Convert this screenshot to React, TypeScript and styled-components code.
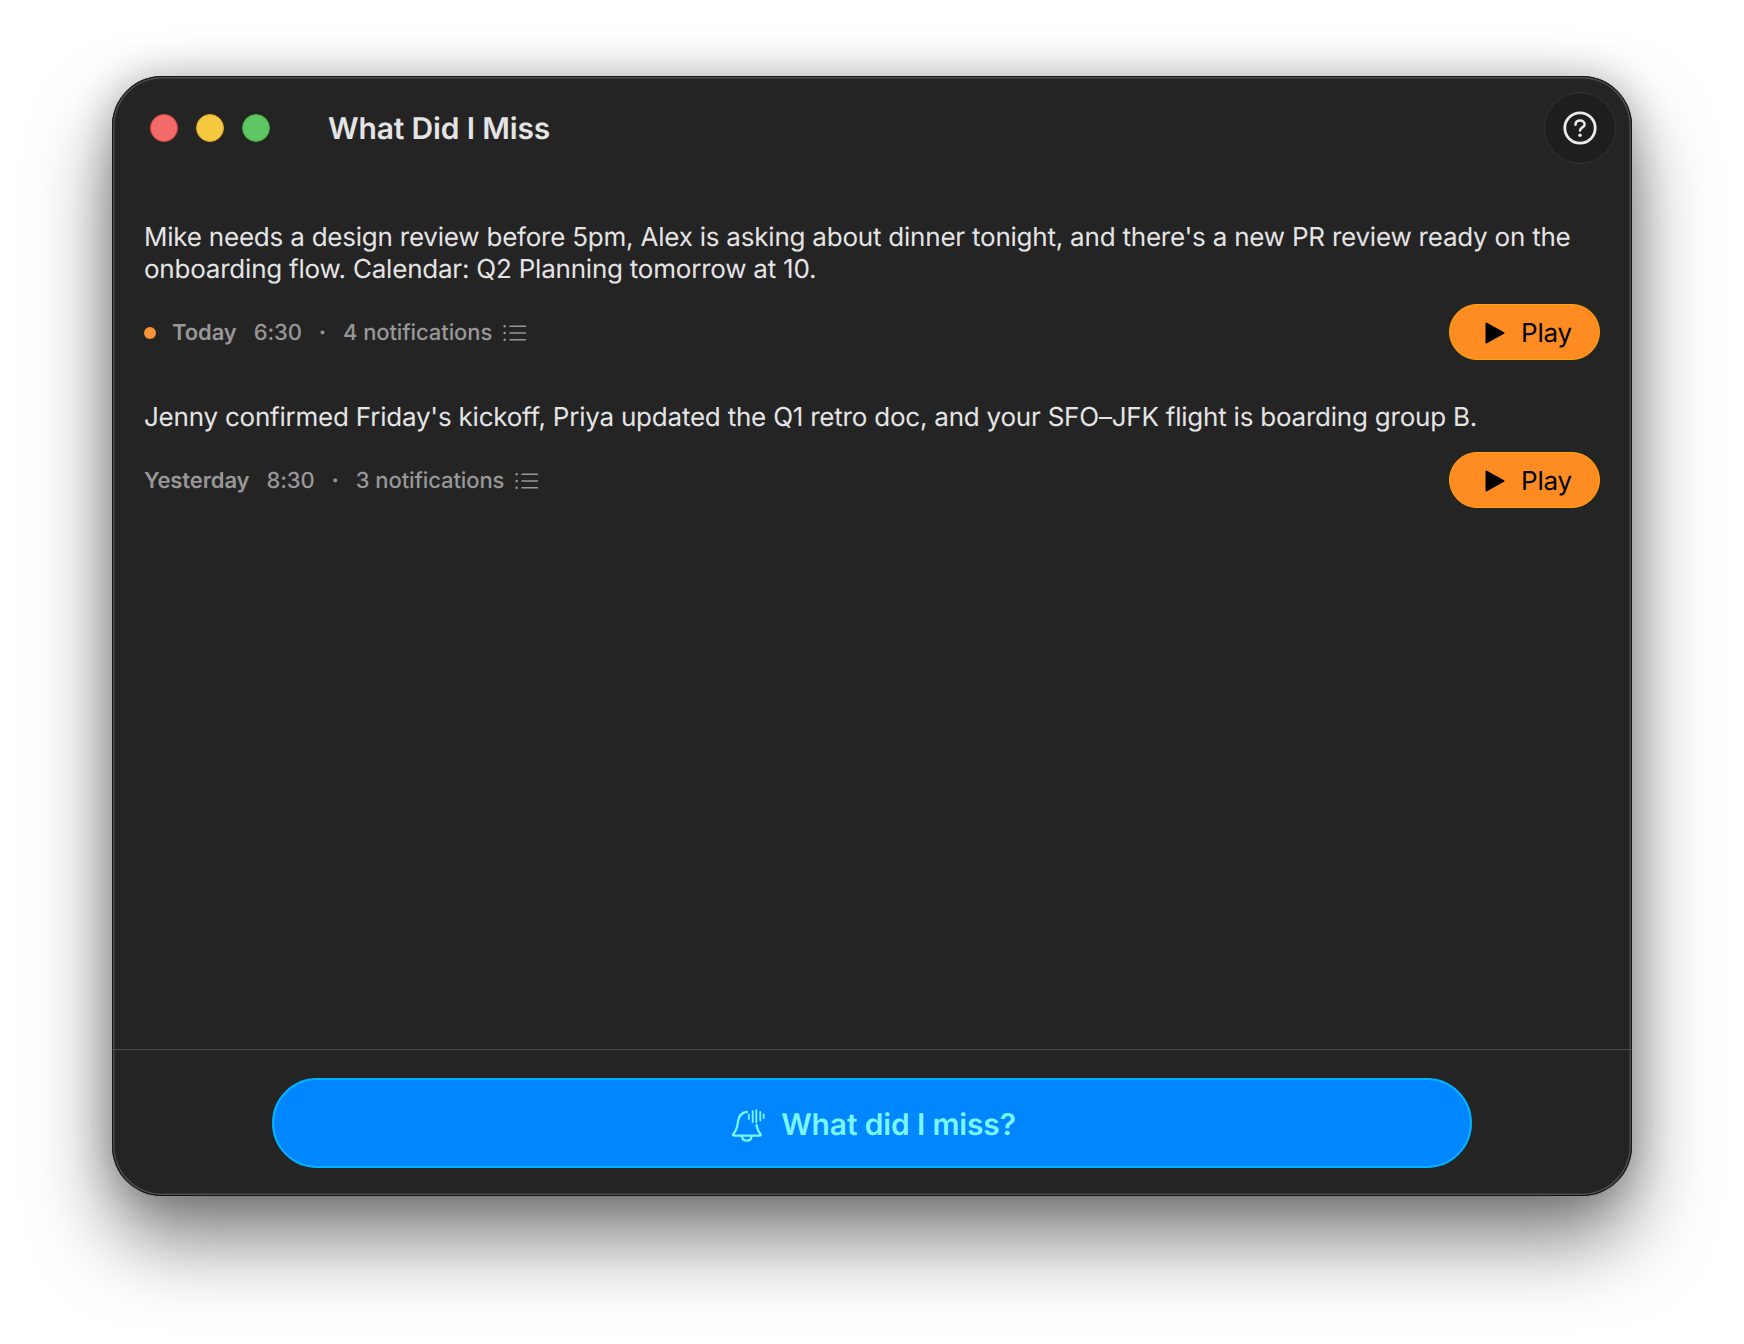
import { createGlobalStyle, styled } from 'styled-components';

const GlobalStyle = createGlobalStyle`
  html, body {
    margin: 0;
    padding: 0;
    background: #fff;
  }
`;

const digests = [
  {
    id: 'today',
    text: "Mike needs a design review before 5pm, Alex is asking about dinner tonight, and there's a new PR review ready on the onboarding flow. Calendar: Q2 Planning tomorrow at 10.",
    day: 'Today',
    time: '6:30',
    count: 4,
    unread: true,
  },
  {
    id: 'yesterday',
    text: "Jenny confirmed Friday's kickoff, Priya updated the Q1 retro doc, and your SFO–JFK flight is boarding group B.",
    day: 'Yesterday',
    time: '8:30',
    count: 3,
    unread: false,
  },
];

const ListIcon = () => (
  <svg width="24" height="24" viewBox="0 0 24 24" fill="none" stroke="#979797" strokeWidth="1.5" strokeLinecap="round">
    <path d="M7 5.2h15.5M7 12h15.5M7 18.8h15.5" />
    <path d="M1.6 5.2h.1M1.6 12h.1M1.6 18.8h.1" strokeWidth="2.4" />
  </svg>
);

const PlayIcon = () => (
  <svg width="20" height="22" viewBox="0 0 20 22" fill="#000" stroke="#000" strokeWidth="2" strokeLinejoin="round">
    <path d="M1.500 1.500 18.500 11 1.500 20.500Z" />
  </svg>
);

const HelpIcon = () => (
  <svg width="36" height="36" viewBox="0 0 36 36" fill="none" stroke="#ececec" strokeLinecap="round">
    <circle cx="18" cy="18" r="15.200" strokeWidth="2.800" />
    <path d="M13.500 14.800c0-2.800 2-4.300 4.600-4.300s4.500 1.600 4.500 3.900c0 2.900-4.600 3.100-4.600 6.200" strokeWidth="2.500" />
    <circle cx="18" cy="25.200" r="1.700" fill="#ececec" stroke="none" />
  </svg>
);

const BellIcon = () => (
  <svg width="33" height="33" viewBox="0 0 33 33" fill="none" stroke="#7bf6ff" strokeWidth="2.300" strokeLinecap="round" strokeLinejoin="round">
    <path d="M15 2.800C9.500 3.500 6.500 7.500 6 12.500c-.5 5.500-2 9.500-4.800 12.700-.6.700-.2 1.500.7 1.500h25.900c.9 0 1.300-.8.7-1.500-1.900-2.300-3.300-5-4-9" />
    <path d="M10 27.500c.4 2.600 2.400 4.200 4.800 4.200s4.400-1.600 4.800-4.200" />
    <path d="M16.800 5.500v4.500M20.700 2.200v11M24.300 1v12.300M28.300 3v8.500M31.700 5.500v3.500" strokeWidth="1.800" />
  </svg>
);

const App = () => (
  <>
    <GlobalStyle />
    <Page>
      <Window>
        <TitleBar>
          <Lights>
            <Light $fill="#f26a6a" $edge="#d9484a" />
            <Light $fill="#f5c83f" $edge="#d9a625" />
            <Light $fill="#60c563" $edge="#3fa846" />
          </Lights>
          <Title>What Did I Miss</Title>
          <HelpButton aria-label="Help">
            <HelpIcon />
          </HelpButton>
        </TitleBar>
        <Content>
          {digests.map(digest => (
            <Digest key={digest.id}>
              <Summary>{digest.text}</Summary>
              <MetaRow>
                <Meta>
                  {digest.unread && <UnreadDot />}
                  <Day>{digest.day}</Day>
                  <span>{digest.time}</span>
                  <Separator>·</Separator>
                  <Count>
                    {digest.count} notifications
                    <ListIcon />
                  </Count>
                </Meta>
                <PlayButton>
                  <PlayIcon />
                  Play
                </PlayButton>
              </MetaRow>
            </Digest>
          ))}
        </Content>
        <Footer>
          <AskButton>
            <BellIcon />
            What did I miss?
          </AskButton>
        </Footer>
      </Window>
    </Page>
  </>
);

const Page = styled.div`
  box-sizing: border-box;
  width: 1744px;
  height: 1344px;
  padding: 76px 112px 148px;
  overflow: hidden;
  font-family: Inter, 'Liberation Sans', sans-serif;
  letter-spacing: -0.01em;
  text-rendering: geometricPrecision;
`;

const Window = styled.div`
  display: flex;
  flex-direction: column;
  height: 100%;
  background: #242424;
  border-radius: 50px;
  box-shadow:
    inset 0 0 0 1px #161616,
    inset 0 0 0 2.5px #4c4c4c,
    0 44px 80px rgba(0, 0, 0, 0.5),
    0 0 40px rgba(0, 0, 0, 0.24);
`;

const TitleBar = styled.div`
  display: flex;
  align-items: center;
  height: 72px;
  padding: 16px 16px 0 38px;
`;

const Lights = styled.div`
  display: flex;
  gap: 18px;
`;

const Light = styled.span<{ $fill: string; $edge: string }>`
  box-sizing: border-box;
  width: 28px;
  height: 28px;
  border-radius: 50%;
  background: ${p => p.$fill};
  border: 1px solid ${p => p.$edge};
`;

const Title = styled.h1`
  margin: 1px 0 0 58px;
  font-size: 30px;
  font-weight: 600;
  color: #e4e4e4;
`;

const HelpButton = styled.button`
  display: flex;
  align-items: center;
  justify-content: center;
  box-sizing: border-box;
  width: 72px;
  height: 72px;
  margin-left: auto;
  padding: 0;
  background: #1e1e1e;
  border: 1.5px solid #333;
  border-radius: 50%;
`;

const Content = styled.div`
  flex: 1;
  display: flex;
  flex-direction: column;
  gap: 42px;
  padding: 58px 32px 0;
`;

const Digest = styled.div`
  display: flex;
  flex-direction: column;
  gap: 18px;
`;

const Summary = styled.p`
  margin: 0;
  font-size: 26px;
  line-height: 32px;
  letter-spacing: -0.22px;
  color: #e4e4e4;
`;

const MetaRow = styled.div`
  display: flex;
  align-items: center;
  justify-content: space-between;
`;

const Meta = styled.div`
  display: flex;
  align-items: center;
  gap: 17px;
  padding-top: 1px;
  font-size: 22px;
  font-weight: 500;
  letter-spacing: -0.1px;
  color: #979797;
`;

const UnreadDot = styled.span`
  width: 12px;
  height: 12px;
  margin-right: -1px;
  border-radius: 50%;
  background: #f99538;
`;

const Day = styled.span`
  font-weight: 600;
`;

const Separator = styled.span`
  font-weight: 700;
`;

const Count = styled.span`
  display: flex;
  align-items: center;
  gap: 11px;
`;

const PlayButton = styled.button`
  display: flex;
  align-items: center;
  justify-content: center;
  gap: 16px;
  box-sizing: border-box;
  width: 151px;
  height: 56px;
  padding: 2px 0 0 8px;
  font-family: inherit;
  font-size: 26px;
  letter-spacing: inherit;
  text-rendering: inherit;
  color: #000;
  background: #ff8c22;
  border: 1.5px solid #ffa600;
  border-radius: 28px;
`;

const Footer = styled.div`
  display: flex;
  justify-content: center;
  height: 147px;
  box-sizing: border-box;
  padding-top: 27.5px;
  border-top: 1.5px solid #4a4a4a;
`;

const AskButton = styled.button`
  display: flex;
  align-items: center;
  justify-content: center;
  gap: 16px;
  box-sizing: border-box;
  width: 1200px;
  height: 90px;
  padding: 5px 0 0 4px;
  font-family: inherit;
  font-size: 30px;
  font-weight: 600;
  letter-spacing: inherit;
  text-rendering: inherit;
  color: #7bf6ff;
  background: #0086ff;
  border: 2px solid #00b4ff;
  border-radius: 45px;
`;

export default App;
